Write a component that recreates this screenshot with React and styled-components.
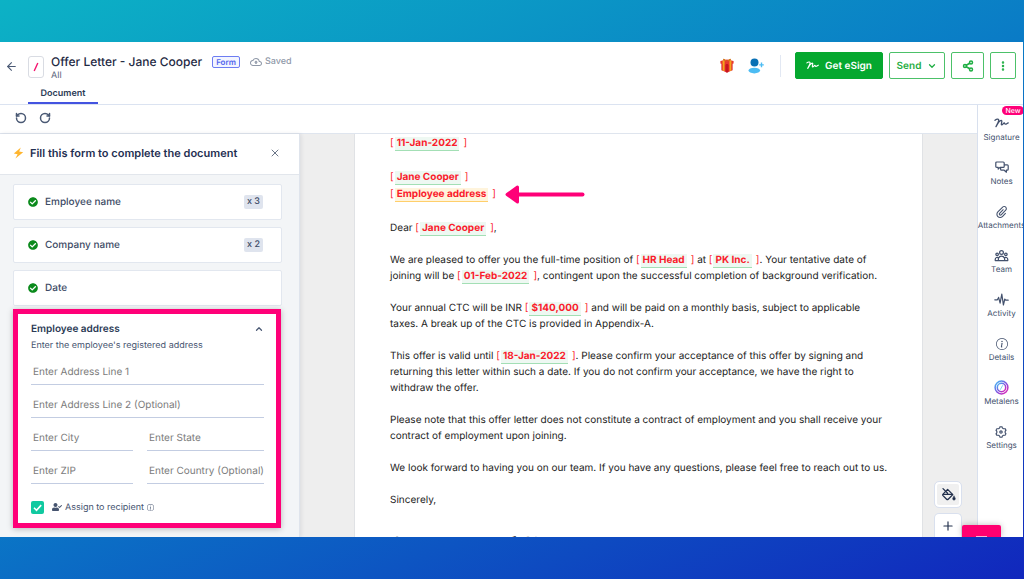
import React, { useState } from 'react';
import styled, { createGlobalStyle } from 'styled-components';
import {
  ArrowLeft,
  ChevronDown,
  ChevronUp,
  EllipsisVertical,
  Plus,
  RotateCcw,
  RotateCw,
  Share2,
  X,
} from 'lucide-react';
import { FaCheckCircle, FaUserCheck } from 'react-icons/fa';
import { BsInfoCircle } from 'react-icons/bs';
import { HiOutlineUserGroup } from 'react-icons/hi';
import { ImAttachment } from 'react-icons/im';
import { MdOutlineCloudUpload } from 'react-icons/md';
import { RiSettings3Line } from 'react-icons/ri';

const GlobalStyle = createGlobalStyle`
  * {
    box-sizing: border-box;
  }
  body {
    margin: 0;
    font-family: 'Inter', 'Liberation Sans', sans-serif;
    text-rendering: geometricPrecision;
    color: #2b3a55;
  }
  button, input {
    font-family: inherit;
    text-rendering: inherit;
    color: inherit;
  }
  h1, h2, h3, p {
    margin: 0;
  }
  svg {
    display: block;
    flex-shrink: 0;
  }
`;

const Backdrop = styled.div`
  height: 100vh;
  padding: 42px 1px 42px 0;
  background: linear-gradient(156deg, #0cb2c5 0%, #0a78c6 50%, #1127bd 100%);
`;

const AppWindow = styled.div`
  height: 100%;
  display: flex;
  flex-direction: column;
  overflow: hidden;
  background-color: #ffffff;
`;

const Header = styled.header`
  display: flex;
  justify-content: space-between;
  height: 63px;
  padding-right: 7px;
  border-bottom: 1px solid #dbe3f1;
`;

const HeaderLeft = styled.div`
  display: flex;
`;

const IconButton = styled.button`
  display: flex;
  align-items: center;
  justify-content: center;
  padding: 0;
  border: none;
  background: none;
  color: ${(props) => props.$color || '#4a5974'};
  cursor: pointer;
`;

const BackButton = styled(IconButton)`
  width: 28px;
  height: 48px;
  padding-right: 6px;
`;

const FileIcon = styled.div`
  width: 16px;
  height: 22px;
  margin-top: 14px;
  display: flex;
  align-items: center;
  justify-content: center;
  border: 1px solid #d9dce3;
  border-radius: 3px;
`;

const DocumentHead = styled.div`
  display: flex;
  flex-direction: column;
  justify-content: space-between;
`;

const HeadRow = styled.div`
  display: flex;
  gap: 7px;
`;

const TitleBlock = styled.div`
  padding-top: 11px;
`;

const TitleRow = styled.div`
  display: flex;
  align-items: center;
  gap: 10px;
`;

const Title = styled.h1`
  font-size: 12px;
  line-height: 17px;
  font-weight: 500;
  color: #1f2a44;
`;

const FormTag = styled.span`
  padding: 0 3px;
  border: 1px solid #6d7df2;
  border-radius: 2px;
  background-color: #f3f5ff;
  font-size: 8px;
  line-height: 10px;
  font-weight: 600;
  color: #5266ee;
`;

const Saved = styled.span`
  display: flex;
  align-items: center;
  gap: 3px;
  font-size: 9px;
  line-height: 12px;
  font-weight: 500;
  color: #8f98a8;
`;

const Folder = styled.p`
  font-size: 9px;
  line-height: 11px;
  color: #5a667c;
`;

const Tab = styled.button`
  align-self: flex-start;
  width: 70px;
  height: 19px;
  padding: 0;
  border: none;
  border-bottom: 2px solid #4353e0;
  background: none;
  font-size: 9px;
  font-weight: 600;
  cursor: pointer;
`;

const HeaderActions = styled.div`
  display: flex;
  align-self: flex-start;
  align-items: center;
  gap: 6px;
  padding-top: 10px;
`;

const Quick = styled.div`
  display: flex;
  align-items: center;
  gap: 14px;
  height: 22px;
  margin-right: 8px;
  padding-right: 15px;
  border-right: 1px solid #e2e8f3;
`;

const ActionButton = styled.button`
  display: flex;
  align-items: center;
  justify-content: center;
  gap: 6px;
  width: ${(props) => props.$width};
  height: 27px;
  padding: 0;
  border: 1px solid ${(props) => (props.$primary ? '#05a82f' : '#4cc169')};
  border-radius: 2px;
  background-color: ${(props) => (props.$primary ? '#05a82f' : '#ffffff')};
  color: ${(props) => (props.$primary ? '#ffffff' : '#1fae43')};
  font-size: 10px;
  font-weight: 600;
  cursor: pointer;
`;

const Content = styled.div`
  flex: 1;
  min-height: 0;
  display: flex;
`;

const Main = styled.main`
  flex: 1;
  min-width: 0;
  display: flex;
  flex-direction: column;
`;

const Toolbar = styled.div`
  display: flex;
  align-items: center;
  gap: 12px;
  height: 29px;
  padding: 0 15px 2px;
  border-bottom: 1px solid #dfe5ee;
`;

const Workspace = styled.div`
  flex: 1;
  min-height: 0;
  display: flex;
  background-color: #eeeeee;
`;

const Panel = styled.aside`
  flex: 0 0 300px;
  display: flex;
  flex-direction: column;
  background-color: #f3f5f7;
  border-right: 1px solid #dfe4ec;
  box-shadow: 1px 0 4px rgba(30, 40, 70, 0.1);
  overflow: hidden;
`;

const PanelHeader = styled.div`
  display: flex;
  align-items: center;
  gap: 6px;
  height: 41px;
  flex-shrink: 0;
  padding: 0 18px 2px 13px;
  border-bottom: 1px solid #e2e6ec;
  background-color: #ffffff;
`;

const PanelTitle = styled.h2`
  flex: 1;
  font-size: 11px;
  line-height: 16px;
  font-weight: 600;
  color: #1f2f52;
`;

const FieldList = styled.div`
  display: flex;
  flex-direction: column;
  gap: 7px;
  padding: 9px 17px 0 13px;
`;

const FieldRow = styled.button`
  display: flex;
  align-items: center;
  gap: 7px;
  height: 36px;
  padding: 0 18px 0 14px;
  border: 1px solid #e2e7ef;
  border-radius: 2px;
  background-color: #ffffff;
  font-size: 10px;
  font-weight: 500;
  color: #3d4b66;
  text-align: left;
  cursor: pointer;
`;

const FieldName = styled.span`
  flex: 1;
`;

const Count = styled.span`
  padding: 0 3px;
  border-radius: 2px;
  background-color: #dfe4ee;
  font-size: 9px;
  line-height: 14px;
`;

const AddressCard = styled.section`
  margin: 3px 18px 0 13px;
  padding: 8px 12px 6px 13px;
  border: 5px solid #ff0078;
  background-color: #ffffff;
  box-shadow: 0 1px 6px rgba(0, 0, 0, 0.25);
`;

const CardHeader = styled.div`
  display: flex;
  align-items: center;
  justify-content: space-between;
`;

const CardTitle = styled.h3`
  font-size: 10px;
  line-height: 14px;
  font-weight: 600;
`;

const Hint = styled.p`
  margin-top: 4px;
  font-size: 9px;
  line-height: 12px;
  color: #46546f;
`;

const AddressGrid = styled.div`
  display: grid;
  grid-template-columns: 102px 1fr;
  column-gap: 14px;
`;

const AddressInput = styled.input`
  grid-column: ${(props) => (props.$wide ? '1 / -1' : 'auto')};
  width: 100%;
  min-width: 0;
  height: 33px;
  padding: 11px 0 3px 2px;
  border: none;
  border-bottom: 1px solid #c3cde2;
  background: none;
  font-size: 10px;
  outline: none;
  &::placeholder {
    color: #7b7b7b;
  }
`;

const AssignRow = styled.label`
  display: flex;
  align-items: center;
  gap: 3px;
  margin-top: 13px;
  height: 20px;
  font-size: 9px;
  color: #46546f;
  cursor: pointer;
`;

const Checkbox = styled.input`
  appearance: none;
  width: 13px;
  height: 13px;
  margin: 0 5px 0 0;
  border-radius: 2px;
  background: #10c9a0 url("data:image/svg+xml,%3Csvg xmlns='http://www.w3.org/2000/svg' viewBox='0 0 13 13'%3E%3Cpath d='M3 6.8l2.5 2.5 4.7-5.2' fill='none' stroke='white' stroke-width='1.6'/%3E%3C/svg%3E");
  &:not(:checked) {
    background: #ffffff;
    border: 1px solid #c3cde2;
  }
`;

const Canvas = styled.div`
  flex: 1;
  min-width: 0;
  display: flex;
  overflow: hidden;
`;

const Page = styled.article`
  flex: 1;
  margin-left: 54px;
  padding: 1px 33px 0 35px;
  border: solid #e0e2e5;
  border-width: 0 1px;
  background-color: #ffffff;
  font-size: 10px;
  line-height: 16px;
  color: #1c1c1c;
`;

const AddressBlock = styled.p`
  margin-bottom: 17px;
  line-height: 17px;
`;

const Paragraph = styled.p`
  margin-bottom: 16px;
`;

const Placeholder = styled.span`
  color: #fa1c2c;
  white-space: nowrap;
`;

const PlaceholderValue = styled.strong`
  margin: 0 4px 0 1px;
  padding: 0 2px 1px;
  border-bottom: 1px solid ${(props) => (props.$active ? '#ffcf6b' : '#a3dfb5')};
  background-color: ${(props) => (props.$active ? '#fff4dc' : '#eef8f2')};
  font-weight: 700;
`;

const SectionHeading = styled.h2`
  margin-top: 24px;
  font-family: 'Liberation Serif', serif;
  font-size: 20px;
  line-height: 24px;
  font-weight: 400;
  color: #111111;
`;

const CanvasTools = styled.div`
  flex: 0 0 54px;
  display: flex;
  flex-direction: column;
  justify-content: flex-end;
  align-items: center;
  gap: 5px;
  padding-right: 4px;
  overflow: hidden;
`;

const CanvasButton = styled.button`
  display: flex;
  align-items: center;
  justify-content: center;
  width: 28px;
  height: 27px;
  padding: 0;
  border: 1px solid #d9e0ee;
  border-radius: 5px;
  background-color: ${(props) => (props.$inset ? '#f0f0f0' : '#ffffff')};
  box-shadow: ${(props) => (props.$inset ? 'inset 0 0 0 2px #ffffff' : 'none')};
  color: #22304c;
  cursor: pointer;
  &:last-child {
    height: 24px;
    border-bottom: none;
    border-radius: 5px 5px 0 0;
  }
`;

const SideNav = styled.nav`
  position: relative;
  flex: 0 0 46px;
  min-width: 0;
  width: 46px;
  display: flex;
  flex-direction: column;
  align-items: center;
  gap: 15px;
  padding: 9px 0 0 2px;
  border-left: 1px solid #d8e0ee;
  background-color: #ffffff;
`;

const NavItem = styled.button`
  position: relative;
  display: flex;
  flex-direction: column;
  align-items: center;
  justify-content: flex-end;
  height: 29px;
  padding: 0;
  border: none;
  background: none;
  font-size: 8px;
  line-height: 11px;
  color: #43516d;
  cursor: pointer;
`;

const NavIcon = styled.span`
  display: flex;
  align-items: center;
  height: 17px;
`;

const NewBadge = styled.span`
  position: absolute;
  top: -8px;
  left: 19px;
  padding: 0 3px;
  border-radius: 5px;
  background-color: #ff0078;
  font-size: 7px;
  line-height: 9px;
  font-weight: 500;
  color: #ffffff;
`;

const ChatButton = styled.button`
  position: absolute;
  right: 22px;
  bottom: 0;
  width: 39px;
  height: 12px;
  padding: 0;
  display: flex;
  align-items: flex-end;
  justify-content: center;
  border: none;
  border-radius: 2px 2px 0 0;
  background-color: #ff0070;
  box-shadow: 0 0 6px rgba(0, 0, 0, 0.25);
`;

const PointerArrow = styled.svg`
  position: absolute;
  left: 505px;
  top: 185px;
`;

const SignatureIcon = ({ width = 15 }) => (
  <svg width={width} height={width * 0.67} viewBox="0 0 15 10" fill="none" stroke="currentColor" strokeWidth="1.3" strokeLinecap="round" strokeLinejoin="round">
    <path d="M1 2.2C3 .6 5.2.8 4.6 2.8 4 5 2.6 7.2 2 8.6 3.6 5.6 5.6 2.6 7.2 2.4 8.8 2.2 6.6 6.6 7.6 6.8 8.6 7 9.4 5 10.2 5 11 5 10.4 6.2 11.4 6.2 12.4 6.2 13.2 5.2 14.2 4.8" />
  </svg>
);

const NotesIcon = () => (
  <svg width="14" height="13" viewBox="0 0 14 13" fill="none" stroke="currentColor" strokeWidth="1.2" strokeLinejoin="round">
    <path d="M1.8 1h6.4q1 0 1 1v3.4q0 1-1 1H5L3.2 8V6.4H1.8q-1 0-1-1V2q0-1 1-1z" />
    <path d="M9.2 3.8h3q1 0 1 1v3.4q0 1-1 1h-.8v2L9.2 9.2H6.6q-1 0-1-1V6.4" />
  </svg>
);

const ActivityIcon = () => (
  <svg width="15" height="13" viewBox="0 0 15 13" fill="none" stroke="currentColor" strokeWidth="1.2" strokeLinecap="round" strokeLinejoin="round">
    <path d="M.8 6.8h2.6l1.2-2.4 1.5 5.8L7.8 1l1.6 11 1.4-6 .9 1.2h2.5" />
  </svg>
);

const MetalensIcon = () => (
  <svg width="15" height="15" viewBox="0 0 15 15" fill="none">
    <defs>
      <linearGradient id="metalens" x1="0" y1="0" x2="1" y2="1">
        <stop offset="0" stopColor="#42c4f5" />
        <stop offset="0.5" stopColor="#7a52e0" />
        <stop offset="1" stopColor="#f01eb0" />
      </linearGradient>
    </defs>
    <circle cx="7.5" cy="7.5" r="6.4" stroke="url(#metalens)" strokeWidth="1.5" />
    <circle cx="7.5" cy="7.5" r="4.2" stroke="url(#metalens)" strokeWidth="1.5" />
    <path d="M8.8 5.2L6.2 9.8" stroke="#7fd6f0" />
  </svg>
);

const GiftIcon = () => (
  <svg width="14" height="15" viewBox="0 0 14 15">
    <path d="M1.4 5l5.6 1.6L12.6 5v7.2L7 14.6l-5.6-2.4z" fill="#e0242b" />
    <path d="M.4 3L7 1.4 13.6 3v2.6L7 7.2.4 5.6z" fill="#e8382f" />
    <path d="M2.6 2.5h2v10.8l-2-.8zM9.4 2.5h2v10l-2 .8z" fill="#f4a51c" />
    <path d="M5.8 6h2.4v8.2L7 14.6l-1.2-.4z" fill="#c4161f" />
    <path d="M7 3.4C4.8.2 2.8.2 3 1.6 3.2 2.8 5 3.2 7 3.4c2-.2 3.8-.6 4-1.8.2-1.4-1.8-1.4-4 1.8z" fill="#d2741a" />
  </svg>
);

const InviteIcon = () => (
  <svg width="17" height="16" viewBox="0 0 17 16">
    <circle cx="6.5" cy="4.5" r="4" fill="#0870b5" />
    <ellipse cx="6.3" cy="12.6" rx="5.8" ry="2.8" fill="#4cbcf3" />
    <path d="M13.5 4.6v4.6M11.2 6.9h4.6" stroke="#4cbcf3" strokeWidth="1.4" />
  </svg>
);

const BoltIcon = () => (
  <svg width="11" height="12" viewBox="0 0 11 12">
    <path d="M7.8.6L.8 6.6l3.8.6-2.2 4.2 7.8-6.2-4-.6z" fill="#ffb52e" />
  </svg>
);

const FillIcon = () => (
  <svg width="15" height="15" viewBox="0 0 15 15" fill="none" stroke="currentColor" strokeWidth="1.3" strokeLinecap="round" strokeLinejoin="round">
    <path d="M6.6 2.4l5.2 5.2-4.6 4.6q-.8.7-1.6 0L2 8.6q-.7-.8 0-1.5z" />
    <path d="M2.4 7.4h9M2 1.6l4.6 4.6" />
    <path d="M13 9.2c.8 1.2 1.3 1.9 1.3 2.6a1.3 1.3 0 0 1-2.6 0c0-.7.5-1.4 1.3-2.6z" fill="currentColor" strokeWidth=".6" />
  </svg>
);

const fields = [
  { name: 'Employee name', count: 3 },
  { name: 'Company name', count: 2 },
  { name: 'Date' },
];

const addressInputs = [
  { label: 'Enter Address Line 1', wide: true },
  { label: 'Enter Address Line 2 (Optional)', wide: true },
  { label: 'Enter City' },
  { label: 'Enter State' },
  { label: 'Enter ZIP' },
  { label: 'Enter Country (Optional)' },
];

const navItems = [
  { label: 'Signature', icon: <SignatureIcon />, isNew: true },
  { label: 'Notes', icon: <NotesIcon /> },
  { label: 'Attachments', icon: <ImAttachment size={12} /> },
  { label: 'Team', icon: <HiOutlineUserGroup size={15} /> },
  { label: 'Activity', icon: <ActivityIcon /> },
  { label: 'Details', icon: <BsInfoCircle size={12} /> },
  { label: 'Metalens', icon: <MetalensIcon /> },
  { label: 'Settings', icon: <RiSettings3Line size={14} /> },
];

const Field = ({ children, active }) => (
  <Placeholder>
    [<PlaceholderValue $active={active}>{children}</PlaceholderValue>]
  </Placeholder>
);

const TopBar = () => (
  <Header>
    <HeaderLeft>
      <BackButton aria-label="Back">
        <ArrowLeft size={13} />
      </BackButton>
      <DocumentHead>
        <HeadRow>
          <FileIcon>
            <svg width="6" height="10" viewBox="0 0 6 10">
              <path d="M4.8 1L1.2 9" stroke="#f5146e" strokeWidth="1.4" />
            </svg>
          </FileIcon>
          <TitleBlock>
            <TitleRow>
              <Title>Offer Letter - Jane Cooper</Title>
              <FormTag>Form</FormTag>
              <Saved>
                <MdOutlineCloudUpload size={12} /> Saved
              </Saved>
            </TitleRow>
            <Folder>All</Folder>
          </TitleBlock>
        </HeadRow>
        <Tab>Document</Tab>
      </DocumentHead>
    </HeaderLeft>
    <HeaderActions>
      <Quick>
        <IconButton aria-label="Gifts">
          <GiftIcon />
        </IconButton>
        <IconButton aria-label="Invite">
          <InviteIcon />
        </IconButton>
      </Quick>
      <ActionButton $primary $width="88px">
        <SignatureIcon width={13} /> Get eSign
      </ActionButton>
      <ActionButton $width="56px">
        Send <ChevronDown size={10} strokeWidth={3} />
      </ActionButton>
      <ActionButton $width="33px" aria-label="Share">
        <Share2 size={12} strokeWidth={3} />
      </ActionButton>
      <ActionButton $width="26px" aria-label="More">
        <EllipsisVertical size={12} strokeWidth={3} />
      </ActionButton>
    </HeaderActions>
  </Header>
);

const FormPanel = () => {
  const [values, setValues] = useState({});
  const [assigned, setAssigned] = useState(true);

  const handleChange = (e) => {
    const { name, value } = e.target;
    setValues((prev) => ({ ...prev, [name]: value }));
  };

  return (
    <Panel>
      <PanelHeader>
        <BoltIcon />
        <PanelTitle>Fill this form to complete the document</PanelTitle>
        <IconButton aria-label="Close" $color="#6b7688">
          <X size={12} />
        </IconButton>
      </PanelHeader>
      <FieldList>
        {fields.map((field) => (
          <FieldRow key={field.name}>
            <FaCheckCircle size={10} color="#0b8a1c" />
            <FieldName>{field.name}</FieldName>
            {field.count && <Count>x {field.count}</Count>}
          </FieldRow>
        ))}
      </FieldList>
      <AddressCard>
        <CardHeader>
          <CardTitle>Employee address</CardTitle>
          <IconButton aria-label="Collapse">
            <ChevronUp size={10} strokeWidth={3} />
          </IconButton>
        </CardHeader>
        <Hint>Enter the employee's registered address</Hint>
        <AddressGrid>
          {addressInputs.map((input) => (
            <AddressInput
              key={input.label}
              name={input.label}
              aria-label={input.label}
              placeholder={input.label}
              value={values[input.label] || ''}
              onChange={handleChange}
              $wide={input.wide}
            />
          ))}
        </AddressGrid>
        <AssignRow>
          <Checkbox
            type="checkbox"
            checked={assigned}
            onChange={(e) => setAssigned(e.target.checked)}
          />
          <FaUserCheck size={10} />
          Assign to recipient
          <BsInfoCircle size={7} />
        </AssignRow>
      </AddressCard>
    </Panel>
  );
};

const Letter = () => (
  <Page>
    <AddressBlock>
      <Field>11-Jan-2022</Field>
    </AddressBlock>
    <AddressBlock>
      <Field>Jane Cooper</Field>
      <br />
      <Field active>Employee address</Field>
    </AddressBlock>
    <Paragraph>
      Dear <Field>Jane Cooper</Field>,
    </Paragraph>
    <Paragraph>
      We are pleased to offer you the full-time position of <Field>HR Head</Field> at{' '}
      <Field>PK Inc.</Field>. Your tentative date of joining will be{' '}
      <Field>01-Feb-2022</Field>, contingent upon the successful completion of background
      verification.
    </Paragraph>
    <Paragraph>
      Your annual CTC will be INR <Field>$140,000</Field> and will be paid on a monthly basis,
      subject to applicable taxes. A break up of the CTC is provided in Appendix-A.
    </Paragraph>
    <Paragraph>
      This offer is valid until <Field>18-Jan-2022</Field>. Please confirm your acceptance of this
      offer by signing and returning this letter within such a date. If you do not confirm your
      acceptance, we have the right to withdraw the offer.
    </Paragraph>
    <Paragraph>
      Please note that this offer letter does not constitute a contract of employment and you shall
      receive your contract of employment upon joining.
    </Paragraph>
    <Paragraph>
      We look forward to having you on our team. If you have any questions, please feel free to
      reach out to us.
    </Paragraph>
    <Paragraph>Sincerely,</Paragraph>
    <SectionHeading>Acceptance and Signature</SectionHeading>
  </Page>
);

const App = () => (
  <Backdrop>
    <GlobalStyle />
    <AppWindow>
      <TopBar />
      <Content>
        <Main>
          <Toolbar>
            <IconButton aria-label="Undo">
              <RotateCcw size={12} strokeWidth={3} />
            </IconButton>
            <IconButton aria-label="Redo">
              <RotateCw size={12} strokeWidth={3} />
            </IconButton>
          </Toolbar>
          <Workspace>
            <FormPanel />
            <Canvas>
              <Letter />
              <CanvasTools>
                <CanvasButton $inset aria-label="Fill color">
                  <FillIcon />
                </CanvasButton>
                <CanvasButton aria-label="Zoom in">
                  <Plus size={14} />
                </CanvasButton>
              </CanvasTools>
            </Canvas>
          </Workspace>
        </Main>
        <SideNav>
          {navItems.map((item) => (
            <NavItem key={item.label}>
              <NavIcon>{item.icon}</NavIcon>
              {item.label}
              {item.isNew && <NewBadge>New</NewBadge>}
            </NavItem>
          ))}
          <ChatButton aria-label="Open chat">
            <svg width="11" height="2" viewBox="0 0 11 2">
              <path d="M0 1.5h11" stroke="#ffb3d0" />
            </svg>
          </ChatButton>
        </SideNav>
      </Content>
    </AppWindow>
    <PointerArrow width="80" height="19" viewBox="0 0 80 19">
      <path d="M12 9.5h65.5" stroke="#ff0078" strokeWidth="4" strokeLinecap="round" />
      <path d="M2 9.5L12.5 2v15z" fill="#ff0078" stroke="#ff0078" strokeWidth="3" strokeLinejoin="round" />
    </PointerArrow>
  </Backdrop>
);

export default App;
